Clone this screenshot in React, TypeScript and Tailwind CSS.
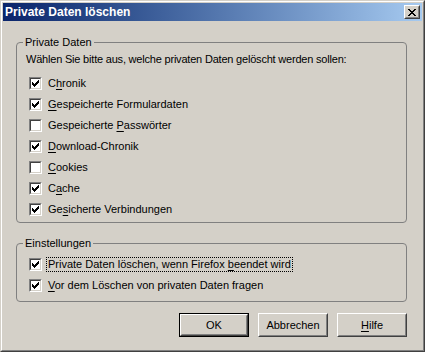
import type { ReactNode } from 'react'

const FONT = "font-['Liberation_Sans',Arial,sans-serif]"

function CheckMark() {
  return (
    <svg width="7" height="7" viewBox="0 0 7 7" shapeRendering="crispEdges" className="block">
      <path
        d="M6 0h1v1h-1z M5 1h2v1h-2z M0 2h1v1h-1z M4 2h3v1h-3z M0 3h2v1h-2z M3 3h3v1h-3z M0 4h5v1h-5z M1 5h3v1h-3z M2 6h1v1h-1z"
        fill="#000"
      />
    </svg>
  )
}

function CloseGlyph() {
  return (
    <svg width="8" height="7" viewBox="0 0 8 7" shapeRendering="crispEdges" className="block">
      <path
        d="M0 0h2v1h-2z M6 0h2v1h-2z M1 1h2v1h-2z M5 1h2v1h-2z M2 2h4v1h-4z M3 3h2v1h-2z M2 4h4v1h-4z M1 5h2v1h-2z M5 5h2v1h-2z M0 6h2v1h-2z M6 6h2v1h-2z"
        fill="#000"
      />
    </svg>
  )
}

function Checkbox({ checked }: { checked: boolean }) {
  return (
    <span className="block w-[13px] h-[13px] shrink-0 border border-t-[#808080] border-l-[#808080] border-b-white border-r-white">
      <span className="flex w-full h-full items-center justify-center bg-white border border-t-[#404040] border-l-[#404040] border-b-[#d4d0c8] border-r-[#d4d0c8]">
        {checked && <CheckMark />}
      </span>
    </span>
  )
}

function Option({ label, checked, focused }: { label: ReactNode; checked: boolean; focused?: boolean }) {
  return (
    <div className="flex items-center h-[21px] pl-[6px] gap-[4px]">
      <Checkbox checked={checked} />
      <span
        className={
          focused
            ? 'px-[1px] leading-[13px] border border-dotted border-black'
            : 'px-[1px] leading-[13px] border border-transparent'
        }
      >
        {label}
      </span>
    </div>
  )
}

function Button({ children, isDefault }: { children: ReactNode; isDefault?: boolean }) {
  const inner = (
    <span className="flex w-full h-full border border-t-white border-l-white border-b-[#404040] border-r-[#404040]">
      <span className="flex w-full h-full items-center justify-center border border-t-[#d4d0c8] border-l-[#d4d0c8] border-b-[#808080] border-r-[#808080]">
        {children}
      </span>
    </span>
  )
  return (
    <div className={isDefault ? 'w-[70px] h-[24px] border border-black bg-[#d4d0c8]' : 'w-[70px] h-[24px] bg-[#d4d0c8]'}>
      {inner}
    </div>
  )
}

const U = ({ children }: { children: ReactNode }) => <span className="underline underline-offset-[2px]">{children}</span>

export default function App() {
  return (
    <div className={`${FONT} text-[11px] text-black w-[425px] h-[352px] bg-[#d4d0c8] border border-t-[#d4d0c8] border-l-[#d4d0c8] border-b-[#404040] border-r-[#404040]`}>
      <div className="w-full h-full border border-t-white border-l-white border-b-[#808080] border-r-[#808080] p-[1px]">
        {/* title bar */}
        <div className="flex items-center h-[18px] pl-[2px] pr-[2px] bg-gradient-to-r from-[#0a246a] to-[#a6caf0]">
          <span className="flex-1 text-white font-bold text-[12px] leading-[18px]">Private Daten löschen</span>
          <div className="w-[16px] h-[14px] bg-[#d4d0c8] border border-t-white border-l-white border-b-[#404040] border-r-[#404040]">
            <div className="flex w-full h-full items-center justify-center border border-t-[#d4d0c8] border-l-[#d4d0c8] border-b-[#808080] border-r-[#808080]">
              <CloseGlyph />
            </div>
          </div>
        </div>

        <div className="pl-[13px] pr-[15px] pt-[14px]">
          <fieldset className="min-w-0 border border-[#808080] rounded-[4px] pl-[6px] pr-[6px] pb-[2px]">
            <legend className="px-[2px] leading-[14px]">Private Daten</legend>
            <div className="ml-[3px] mt-[4px] leading-[13px] tracking-[-0.2px]">
              Wählen Sie bitte aus, welche privaten Daten gelöscht werden sollen:
            </div>
            <div className="mt-[7px]">
              <Option checked label={<>C<U>h</U>ronik</>} />
              <Option checked label={<><U>G</U>espeicherte Formulardaten</>} />
              <Option checked={false} label={<>Gespeicherte <U>P</U>asswörter</>} />
              <Option checked label={<><U>D</U>ownload-Chronik</>} />
              <Option checked={false} label={<><U>C</U>ookies</>} />
              <Option checked label={<>C<U>a</U>che</>} />
              <Option checked label={<>Ge<U>s</U>icherte Verbindungen</>} />
            </div>
          </fieldset>

          <fieldset className="min-w-0 mt-[13px] border border-[#808080] rounded-[4px] pl-[6px] pr-[6px] pb-[5px]">
            <legend className="px-[2px] leading-[14px]">Einstellungen</legend>
            <div className="mt-[4px]">
              <Option checked focused label={<>Private Daten löschen, wenn Firefox <U>b</U>eendet wird</>} />
              <Option checked label={<><U>V</U>or dem Löschen von privaten Daten fragen</>} />
            </div>
          </fieldset>

          <div className="flex justify-end gap-[9px] mt-[11px]">
            <Button isDefault>OK</Button>
            <Button>Abbrechen</Button>
            <Button><><U>H</U>ilfe</></Button>
          </div>
        </div>
      </div>
    </div>
  )
}
